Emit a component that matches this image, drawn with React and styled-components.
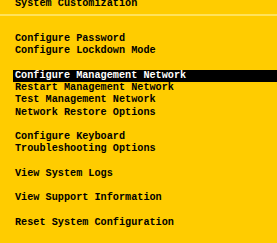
import React from "react";
import styled, { createGlobalStyle } from "styled-components";

const ROW = 12.27;

const GlobalStyle = createGlobalStyle`
  html, body {
    margin: 0;
    padding: 0;
    background: #ffcc00;
  }
`;

const items = [
  "Configure Password",
  "Configure Lockdown Mode",
  null,
  "Configure Management Network",
  "Restart Management Network",
  "Test Management Network",
  "Network Restore Options",
  null,
  "Configure Keyboard",
  "Troubleshooting Options",
  null,
  "View System Logs",
  null,
  "View Support Information",
  null,
  "Reset System Configuration",
];

const SELECTED = "Configure Management Network";

const App = () => {
  return (
    <Screen>
      <GlobalStyle />
      <Header>
        <Title>System Customization</Title>
      </Header>
      <Separator />
      <Menu>
        {items.map((label, i) =>
          label ? (
            <Item key={i} selected={label === SELECTED}>
              {label}
            </Item>
          ) : (
            <Gap key={i} />
          )
        )}
      </Menu>
    </Screen>
  );
};

export default App;

const Screen = styled.div`
  width: 100vw;
  height: 100vh;
  overflow: hidden;
  background: #ffcc00;
  color: #000;
  font-family: "Liberation Mono", "DejaVu Sans Mono", monospace;
  font-size: 10.2px;
  font-weight: 700;
  line-height: ${ROW}px;
`;

const Header = styled.div`
  display: flex;
  align-items: flex-start;
  height: 14px;
  overflow: hidden;
`;

const Title = styled.div`
  margin-top: -2px;
  padding-left: 15px;
  white-space: pre;
`;

const Separator = styled.div`
  height: 1.5px;
  background: #ffe25a;
`;

const Menu = styled.div`
  display: flex;
  flex-direction: column;
  padding-top: 17.5px;
`;

const Item = styled.div`
  height: ${ROW}px;
  white-space: pre;
  margin-left: ${(p) => (p.selected ? "13px" : "0")};
  padding-left: ${(p) => (p.selected ? "2px" : "15px")};
  background: ${(p) => (p.selected ? "#000" : "transparent")};
  color: ${(p) => (p.selected ? "#fff" : "#000")};
`;

const Gap = styled.div`
  height: ${ROW}px;
`;
